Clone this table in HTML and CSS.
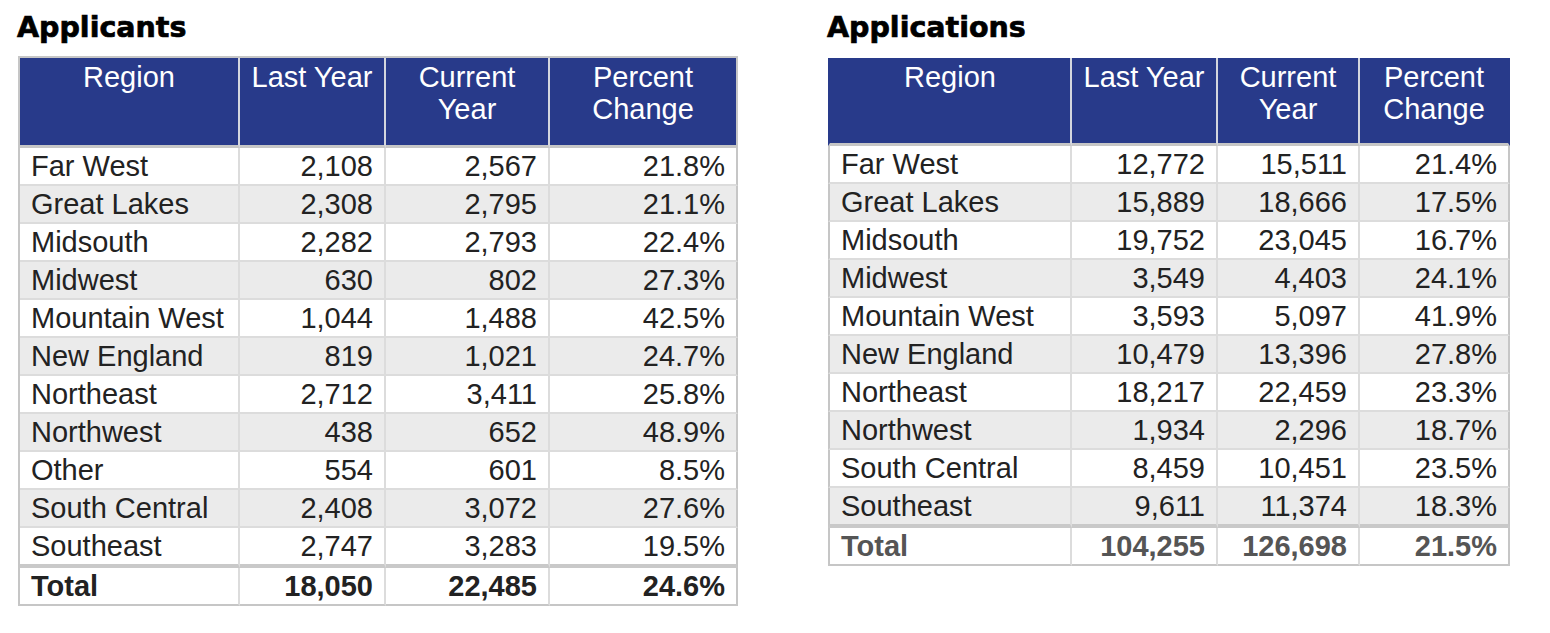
FILE: index.html
```html
<!DOCTYPE html>
<html>
<head>
<meta charset="utf-8">
<link rel="stylesheet" href="styles.css">
</head>
<body>
<div class="page">
  <section class="panel panel-left">
    <h2 class="title">Applicants</h2>
    <table class="grid grid-left">
      <thead>
        <tr>
          <th class="c1">Region</th>
          <th class="c2">Last Year</th>
          <th class="c3">Current<br>Year</th>
          <th class="c4">Percent<br>Change</th>
        </tr>
      </thead>
      <tbody>
        <tr><td>Far West</td><td>2,108</td><td>2,567</td><td>21.8%</td></tr>
        <tr><td>Great Lakes</td><td>2,308</td><td>2,795</td><td>21.1%</td></tr>
        <tr><td>Midsouth</td><td>2,282</td><td>2,793</td><td>22.4%</td></tr>
        <tr><td>Midwest</td><td>630</td><td>802</td><td>27.3%</td></tr>
        <tr><td>Mountain West</td><td>1,044</td><td>1,488</td><td>42.5%</td></tr>
        <tr><td>New England</td><td>819</td><td>1,021</td><td>24.7%</td></tr>
        <tr><td>Northeast</td><td>2,712</td><td>3,411</td><td>25.8%</td></tr>
        <tr><td>Northwest</td><td>438</td><td>652</td><td>48.9%</td></tr>
        <tr><td>Other</td><td>554</td><td>601</td><td>8.5%</td></tr>
        <tr><td>South Central</td><td>2,408</td><td>3,072</td><td>27.6%</td></tr>
        <tr class="last"><td>Southeast</td><td>2,747</td><td>3,283</td><td>19.5%</td></tr>
        <tr class="total"><td>Total</td><td>18,050</td><td>22,485</td><td>24.6%</td></tr>
      </tbody>
    </table>
  </section>
  <section class="panel panel-right">
    <h2 class="title">Applications</h2>
    <table class="grid grid-right">
      <thead>
        <tr>
          <th class="c1">Region</th>
          <th class="c2">Last Year</th>
          <th class="c3">Current<br>Year</th>
          <th class="c4">Percent<br>Change</th>
        </tr>
      </thead>
      <tbody>
        <tr><td>Far West</td><td>12,772</td><td>15,511</td><td>21.4%</td></tr>
        <tr><td>Great Lakes</td><td>15,889</td><td>18,666</td><td>17.5%</td></tr>
        <tr><td>Midsouth</td><td>19,752</td><td>23,045</td><td>16.7%</td></tr>
        <tr><td>Midwest</td><td>3,549</td><td>4,403</td><td>24.1%</td></tr>
        <tr><td>Mountain West</td><td>3,593</td><td>5,097</td><td>41.9%</td></tr>
        <tr><td>New England</td><td>10,479</td><td>13,396</td><td>27.8%</td></tr>
        <tr><td>Northeast</td><td>18,217</td><td>22,459</td><td>23.3%</td></tr>
        <tr><td>Northwest</td><td>1,934</td><td>2,296</td><td>18.7%</td></tr>
        <tr><td>South Central</td><td>8,459</td><td>10,451</td><td>23.5%</td></tr>
        <tr class="last"><td>Southeast</td><td>9,611</td><td>11,374</td><td>18.3%</td></tr>
        <tr class="total"><td>Total</td><td>104,255</td><td>126,698</td><td>21.5%</td></tr>
      </tbody>
    </table>
  </section>
</div>
</body>
</html>
```
FILE: styles.css
```css
html, body {
  margin: 0;
  padding: 0;
  background: #ffffff;
}

.page {
  display: flex;
  align-items: flex-start;
  gap: 90px;
  padding-left: 18px;
}

.panel {
  display: flex;
  flex-direction: column;
}

.title {
  margin: 0 0 12px -1px;
  padding-top: 11px;
  height: 33px;
  line-height: 33px;
  font-family: "DejaVu Sans", sans-serif;
  font-weight: bold;
  font-size: 28.5px;
  color: #000;
  -webkit-text-stroke: 0.7px #000;
  letter-spacing: 0;
}

.grid {
  border-collapse: separate;
  border-spacing: 0;
  table-layout: fixed;
  box-sizing: border-box;
  font-family: "Liberation Sans", Arial, sans-serif;
  font-size: 29px;
  color: #222;
}

.grid-left {
  width: 720px;
  border-top: 2px solid #c6c6c6;
  border-left: 2px solid #c6c6c6;
}

.grid-right {
  width: 682px;
  margin-top: 2px;
}

.grid th {
  box-sizing: border-box;
  background: #283a8a;
  color: #ffffff;
  font-weight: normal;
  text-align: center;
  vertical-align: top;
  line-height: 32px;
  padding: 3px 4px 20px;
  border-right: 2px solid #d4d6de;
  border-bottom: 3px solid #c6c6c6;
}

.grid-left .c1 { width: 220px; }
.grid-left .c2 { width: 146px; }
.grid-left .c3 { width: 164px; }
.grid-left .c4 { width: 188px; border-right-color: #c6c6c6; }

.grid-right th { padding-bottom: 18px; }
.grid-right .c1 { width: 244px; border-left: 2px solid #283a8a; }
.grid-right .c2 { width: 146px; }
.grid-right .c3 { width: 142px; }
.grid-right .c4 { width: 150px; border-right-color: #283a8a; }

.grid td {
  padding: 1px 11px 0;
  height: 35px;
  line-height: 35px;
  white-space: nowrap;
  text-align: right;
  border-right: 2px solid #dcdcdc;
  border-bottom: 2px solid #dcdcdc;
  background: #ffffff;
}

.grid td:first-child {
  text-align: left;
}

.grid td:last-child {
  border-right-color: #c6c6c6;
}

.grid-right td:first-child {
  border-left: 2px solid #c6c6c6;
}

.grid tbody tr:nth-child(even) td {
  background: #ebebeb;
}

.grid tbody tr.last td {
  border-bottom: 4px solid #c9c9c9;
}

.grid tbody tr.total td {
  background: #ffffff;
  font-weight: bold;
  border-bottom-color: #c6c6c6;
}

.grid-left tbody tr.total td {
  color: #222;
}

.grid-right tbody tr.total td {
  color: #555;
}
```
